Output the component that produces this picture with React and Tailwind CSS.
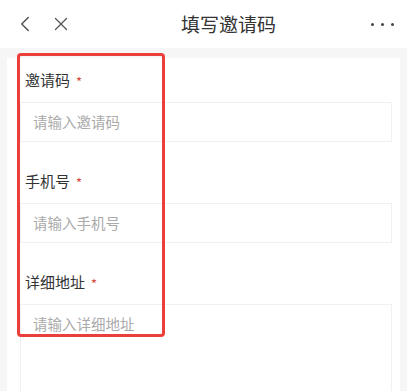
import { ChevronLeft, X } from "lucide-react";

const FONT = { fontFamily: '"Noto Sans CJK SC", "Noto Sans", sans-serif' };

const FIELDS = [
  { label: "邀请码", placeholder: "请输入邀请码" },
  { label: "手机号", placeholder: "请输入手机号" },
  { label: "详细地址", placeholder: "请输入详细地址", area: true },
];

function Field({ label, placeholder, area }) {
  return (
    <div className="mb-[17px]">
      <div className="h-[44px] flex items-center pl-[5px]">
        <span className="text-[15px] text-[#333]">{label}</span>
        <span className="ml-[6px] mt-[4px] text-[13px] text-[#d9473f]">*</span>
      </div>
      <div
        className={
          "border border-[#f0f0f0] flex pl-[12px] " +
          (area ? "h-[120px] items-start pt-[8px]" : "h-[40px] items-center")
        }
      >
        <span className="text-[14.5px] text-[#aaaaaa]">{placeholder}</span>
      </div>
    </div>
  );
}

export default function App() {
  return (
    <div
      className="relative w-[407px] h-[391px] overflow-hidden bg-[#f6f6f6]"
      style={FONT}
    >
      {/* Top bar */}
      <div className="h-[48px] bg-white flex items-center px-[12px]">
        <ChevronLeft size={26} strokeWidth={1.4} className="text-[#555]" />
        <X size={22} strokeWidth={1.4} className="text-[#555] ml-[12px]" />
        <div className="flex-1 text-center text-[19px] text-[#333] pl-[14px]">
          填写邀请码
        </div>
        <div className="flex gap-[7px] mr-[1px]">
          <span className="w-[3px] h-[3px] rounded-full bg-[#444]" />
          <span className="w-[3px] h-[3px] rounded-full bg-[#444]" />
          <span className="w-[3px] h-[3px] rounded-full bg-[#444]" />
        </div>
      </div>

      {/* Form card */}
      <div className="mt-[10px] mx-[7px] bg-white pl-[13px] pr-[8px]">
        {FIELDS.map((f) => (
          <Field key={f.label} {...f} />
        ))}
      </div>

      {/* Highlight box */}
      <div className="absolute left-[17px] top-[53px] w-[148px] h-[284px] border-[3.5px] border-[#ea3f3a] rounded-[4px]" />
    </div>
  );
}
